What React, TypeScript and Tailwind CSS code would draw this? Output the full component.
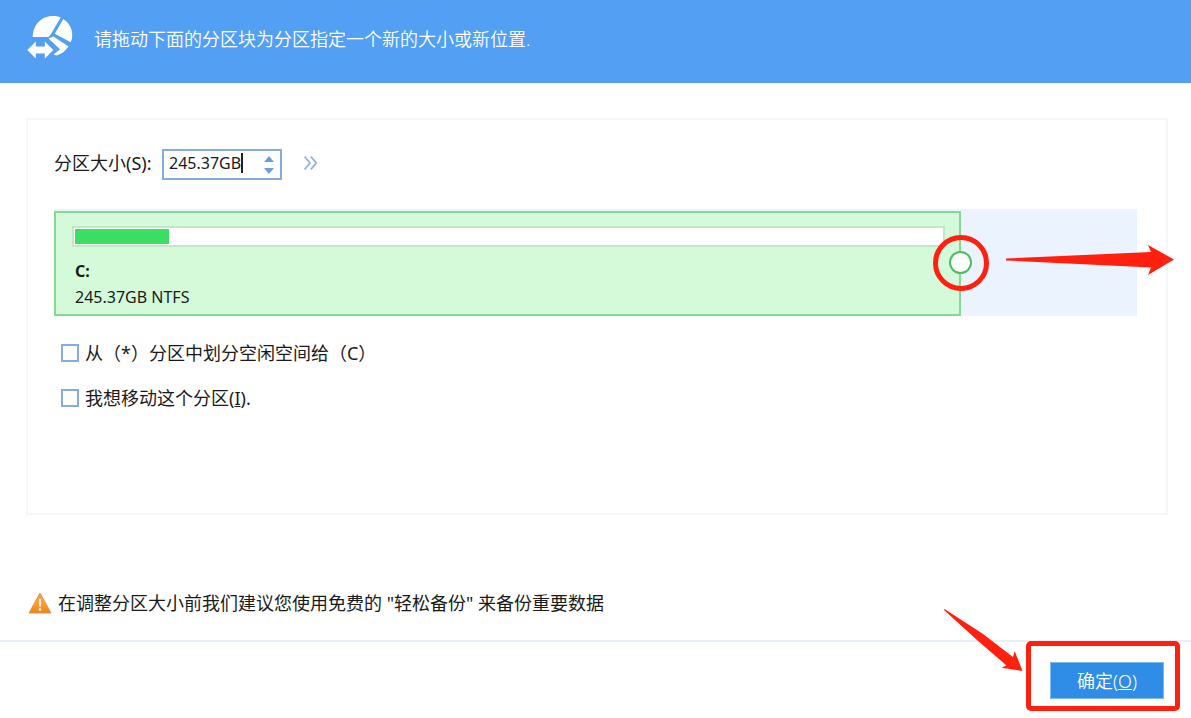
import { useState } from 'react';

const DISK_SIZE = 293;
const USED_SIZE = 26.5;

function ResizeLogo() {
    return (
        <svg viewBox="0 0 48 48" className="h-12 w-12 shrink-0" fill="#fff" aria-hidden="true">
            <path d="M6.700 23C6.700 11 15.500 2 26.500 2c3 0 5.700.4 8.200 1.500L25 20l-2.500 3z" />
            <path d="M37.300 5C43 8.500 46.200 14.500 46.200 21c0 2.700-.5 5-1.500 7.200L28.800 19.800z" />
            <path d="M22.500 24.500 27.500 22.500 42.500 32.500c-3 4.500-7 7.500-12 9l-3-1 6.500-5.300z" />
            <path d="M1.300 36 9.800 27.500v5h9v-5l8.500 8.500-8.500 8.500v-5h-9v5z" />
        </svg>
    );
}

function WarningIcon() {
    return (
        <svg viewBox="0 0 24 22" className="h-[22px] w-6 shrink-0" aria-hidden="true">
            <defs>
                <linearGradient id="warn" x1="0" y1="0" x2="0" y2="1">
                    <stop offset="0" stopColor="#f6a04a" />
                    <stop offset="0.6" stopColor="#fb9d2c" />
                    <stop offset="1" stopColor="#ef8110" />
                </linearGradient>
            </defs>
            <path d="M12 1 23 21H1z" fill="url(#warn)" stroke="#d9965a" strokeWidth="1" strokeLinejoin="round" />
            <path d="M10.800 7h2.400l-.5 8h-1.400z" fill="#fff3df" />
            <circle cx="12" cy="17.500" r="1.400" fill="#fff3df" />
        </svg>
    );
}

function Option({ id, children }: { id: string; children: React.ReactNode }) {
    return (
        <div className="flex h-[45px] items-center gap-1.5">
            <input
                id={id}
                type="checkbox"
                className="h-[18px] w-[18px] appearance-none border-2 border-[#86aae2] bg-white checked:bg-[#86aae2]"
            />
            <label htmlFor={id}>{children}</label>
        </div>
    );
}

export default function App() {
    const [size, setSize] = useState('245.37GB');

    const step = (delta: number) => {
        const next = Math.min(DISK_SIZE, Math.max(USED_SIZE, parseFloat(size) + delta));
        setSize(`${next.toFixed(2)}GB`);
    };

    const current = Math.min(DISK_SIZE, parseFloat(size) || 0);
    const partWidth = (current / DISK_SIZE) * 100;
    const usedWidth = current ? Math.min(100, (USED_SIZE / current) * 100) : 0;

    return (
        <div className="flex min-h-screen flex-col overflow-hidden bg-white font-['Noto_Sans','Noto_Sans_CJK_SC',sans-serif] text-[18px] leading-6 text-[#1a1a1a]">
            <header className="flex h-[83px] items-center gap-5 bg-[#539ff3] px-[26px] pb-2 text-white">
                <ResizeLogo />
                <h1 className="pt-0.5 font-[350]">请拖动下面的分区块为分区指定一个新的大小或新位置.</h1>
            </header>

            <main className="flex flex-1 flex-col pt-[35px] pr-[23px] pl-[26px]">
                <section className="flex-1 border-2 border-[#f3f6fa] pt-[29px] pr-[29px] pl-[26px]">
                    <div className="flex items-center">
                        <label htmlFor="size" className="w-[108px] pb-1 whitespace-nowrap">
                            分区大小(S):
                        </label>
                        <div className="flex h-[31px] w-[120px] items-center border-2 border-[#86aae2] pr-1.5 pl-[5px] text-base">
                            <input
                                id="size"
                                type="text"
                                value={size}
                                onChange={(e) => setSize(e.target.value)}
                                className="field-sizing-content min-w-4 pb-1 caret-transparent outline-none"
                            />
                            <span className="mb-1 h-5 w-0.5 shrink-0 bg-[#222]" />
                            <div className="ml-auto flex flex-col gap-1.5">
                                <button type="button" aria-label="增加" onClick={() => step(1)}>
                                    <svg viewBox="0 0 10 6" className="block h-1.5 w-2.5" fill="#6f9be0">
                                        <path d="M5 0 10 6H0z" />
                                    </svg>
                                </button>
                                <button type="button" aria-label="减少" onClick={() => step(-1)}>
                                    <svg viewBox="0 0 10 6" className="block h-1.5 w-2.5" fill="#6f9be0">
                                        <path d="M0 0h10L5 6z" />
                                    </svg>
                                </button>
                            </div>
                        </div>
                        <button type="button" aria-label="更多" className="ml-[22px] pb-1">
                            <svg viewBox="0 0 13 14" className="block h-3.5 w-[13px]" fill="none" stroke="#94b1e0" strokeWidth="1.800">
                                <path d="M.6.6 6 7 .6 13.400M6.800.6 12.200 7l-5.400 6.400" />
                            </svg>
                        </button>
                    </div>

                    <div className="relative mt-[29px] bg-[#ebf3fe] pt-0.5">
                        <div
                            className="relative h-[105px] border-2 border-[#86d994] bg-[#d5fada] pt-[13px] pr-3.5 pl-4 text-base"
                            style={{ width: `${partWidth}%` }}
                        >
                            <div className="h-[21px] border-2 border-[#bfe9c7] bg-white p-px">
                                <div className="h-full bg-[#3bde63]" style={{ width: `${usedWidth}%` }} />
                            </div>
                            <div className="mt-[11px] pl-[3px] leading-[26px]">
                                <p className="font-bold">C:</p>
                                <p>{size} NTFS</p>
                            </div>
                            <div className="absolute inset-y-0 -right-0.5 flex w-0 items-center justify-center pb-0.5">
                                <div className="flex h-14 w-14 shrink-0 items-center justify-center rounded-full border-5 border-[#ff2010]">
                                    <button
                                        type="button"
                                        aria-label="拖动调整大小"
                                        className="h-[23px] w-[23px] cursor-ew-resize rounded-full border-2 border-[#4fbd5f] bg-white"
                                    />
                                </div>
                            </div>
                        </div>
                        <svg viewBox="0 0 168 30" className="absolute top-9 -right-[37px] h-[30px] w-[168px]" fill="#ff2010" aria-hidden="true">
                            <path d="M0 13.500 145 7l-3-7 26 14.500L142 30l3-7.500L0 15.500z" />
                        </svg>
                    </div>

                    <div className="mt-3.5 pl-[7px]">
                        <Option id="take-space">从（*）分区中划分空闲空间给（C）</Option>
                        <Option id="move-part">
                            我想移动这个分区(<u>I</u>).
                        </Option>
                    </div>
                </section>

                <p className="mt-[76px] mb-[25px] flex items-center gap-1.5 pl-0.5">
                    <WarningIcon />
                    在调整分区大小前我们建议您使用免费的 "轻松备份" 来备份重要数据
                </p>
            </main>

            <footer className="flex h-[78px] items-start justify-end border-t-2 border-[#e8eef7] pr-[11px]">
                <div className="relative -mt-px rounded-[5px] border-5 border-[#ff2010] pt-4 pr-[11px] pb-[7px] pl-[19px]">
                    <button type="button" className="block h-[37px] w-[114px] border border-[#7db8f1] bg-[#2f8de8] font-[350] text-white">
                        确定(<u>O</u>)
                    </button>
                    <svg viewBox="0 0 80 64" className="absolute -top-[38px] -left-[88px] h-16 w-20" fill="#ff2010" aria-hidden="true">
                        <path d="M1.500 1 40 26 70 49 71.700 43 79.500 63 58.500 59.700 63.500 57.500 34 32 1 2z" />
                    </svg>
                </div>
            </footer>
        </div>
    );
}
